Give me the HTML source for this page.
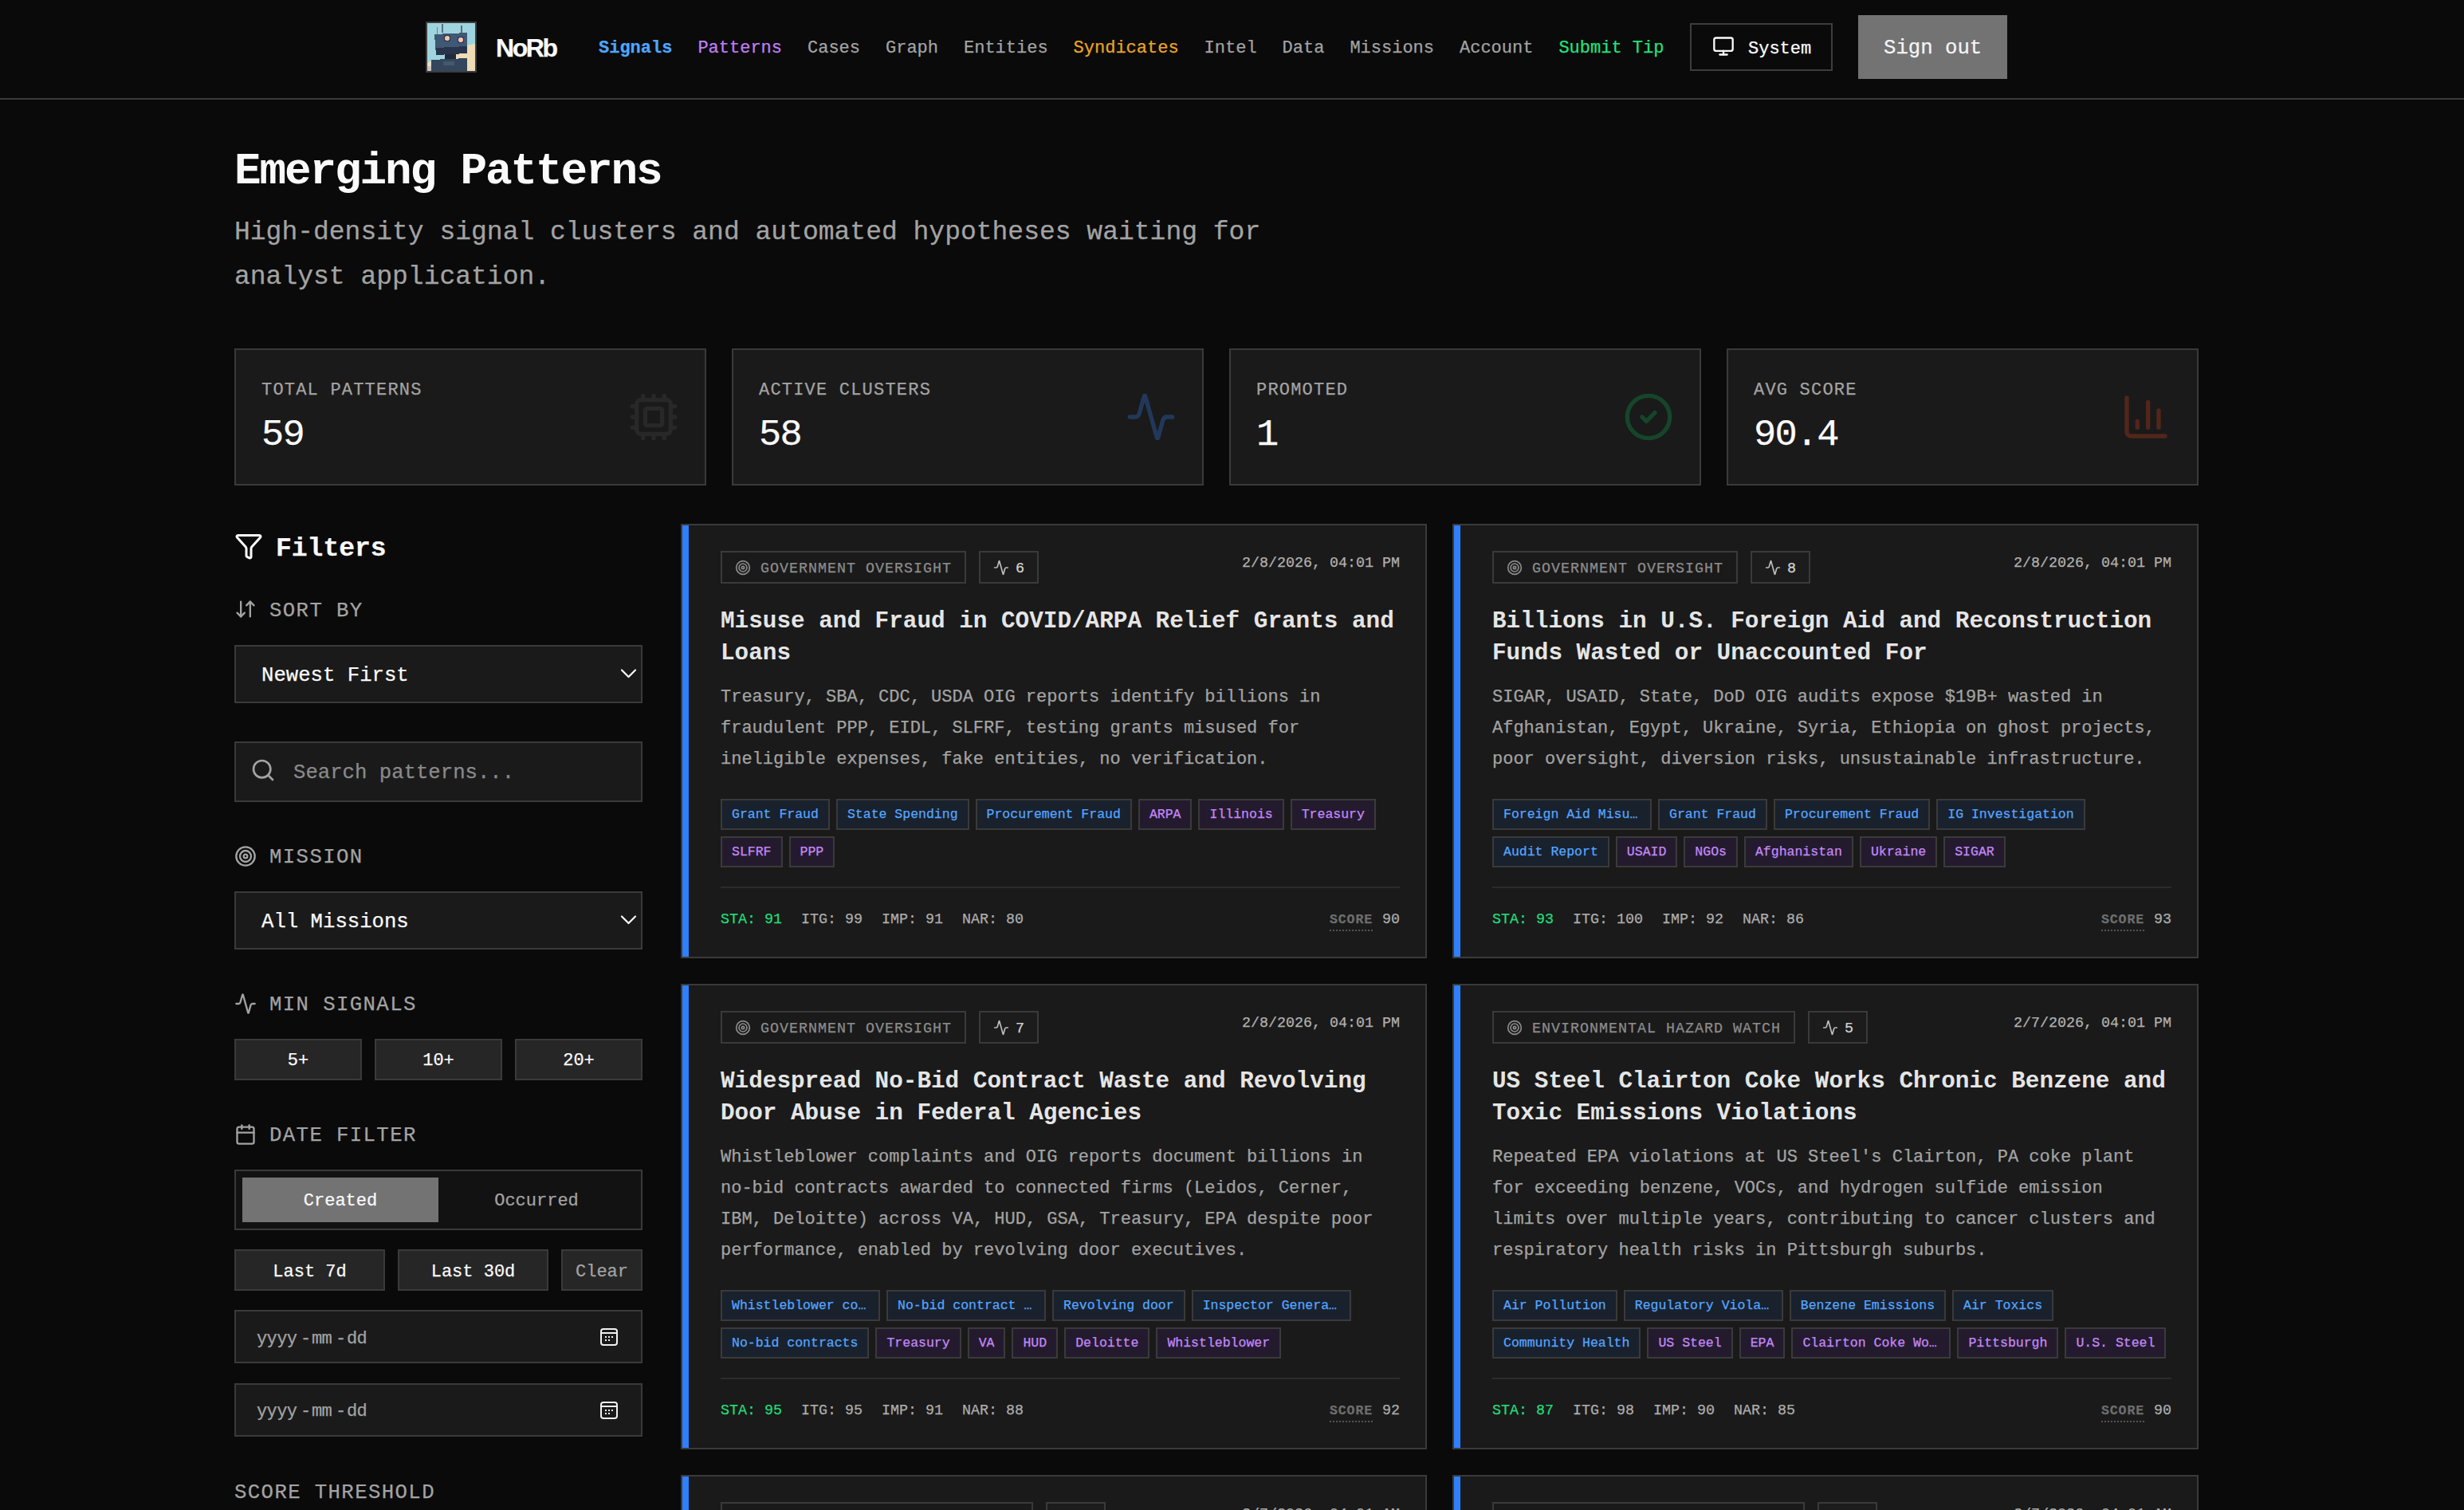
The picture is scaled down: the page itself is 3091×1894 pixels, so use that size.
<!DOCTYPE html>
<html><head><meta charset="utf-8"><title>Emerging Patterns</title>
<style>
*{box-sizing:border-box;margin:0;padding:0}
html,body{width:3091px;height:1894px;overflow:hidden;background:#0a0a0a}
body{position:relative;font-family:"Liberation Mono",monospace;color:#f5f5f5;-webkit-font-smoothing:antialiased}
.abs{position:absolute}
.t,#sub,.cdesc,.tag,.badge,.stats,.date{-webkit-text-stroke:0.25px currentColor}
#title,.ctitle{-webkit-text-stroke:0}
svg.i{position:absolute;fill:none;stroke:currentColor;stroke-width:2;stroke-linecap:round;stroke-linejoin:round}
.t{position:absolute;white-space:nowrap;line-height:1}
/* nav */
#nav{position:absolute;left:0;top:0;width:3091px;height:125px;border-bottom:2px solid #3b3b3b;background:#0a0a0a}
#logo{position:absolute;left:534px;top:27px;width:64px;height:64px;border:2px solid #3d3d3d;overflow:hidden;background:#9fd3dc}
#brand{font-family:"Liberation Sans",sans-serif;font-weight:700;font-size:32px;letter-spacing:-2.4px;color:#fafafa}
.nv{font-size:22.0px;color:#a3a3a3}
.sysbtn{position:absolute;left:2120px;top:29px;width:179px;height:60px;border:2px solid #3d3d3d}
.signout{position:absolute;left:2331px;top:19px;width:187px;height:80px;background:#737373}
/* header */
#title{font-size:56px;font-weight:700;letter-spacing:-2.1px;color:#fafafa}
#sub{position:absolute;left:294px;top:0;width:1344px;font-size:33.0px;line-height:56px;color:#a3a3a3;white-space:normal}
/* stat cards */
.stat{position:absolute;top:437px;width:592px;height:172px;border:2px solid #3a3a3a;background:#1a1a1a}
.stat .lab{font-size:22.0px;letter-spacing:1.2px;color:#a3a3a3}
.stat .val{font-size:44.0px;color:#fafafa}
/* sidebar */
.slab{font-size:25.67px;letter-spacing:1.4px;color:#a3a3a3}
.box{position:absolute;left:294px;width:512px;border:2px solid #3a3a3a;background:#1a1a1a}
.btn{position:absolute;border:2px solid #3a3a3a;background:#262626;font-size:22.0px;color:#fafafa;display:flex;align-items:center;justify-content:center}
/* cards */
.card{position:absolute;width:936px;border:2px solid #3a3a3a;background:#1a1a1a;overflow:hidden}
.card .bar{position:absolute;left:0;top:0;bottom:0;width:8px;background:#2f80fa}
.card .in{position:absolute;left:48px;top:32px;width:852px}
.brow{position:relative;height:41px;display:flex;gap:16px}
.badge{height:41px;border:2px solid #3a3a3a;display:flex;align-items:center;padding:0 16px;font-size:18.33px;letter-spacing:1px;color:#8c8c8c;position:relative}
.badge svg{position:relative;flex:none}
.btxt{position:relative;top:1.5px}
.cnt{letter-spacing:0;color:#d4d4d4}
.date{position:absolute;right:0;top:7px;font-size:18.33px;color:#b0b0b0;line-height:1}
.ctitle{font-size:29.33px;font-weight:700;line-height:40px;color:#e5e5e5}
.cdesc{font-size:22.0px;line-height:39px;color:#a3a3a3}
.tags{display:flex;flex-wrap:wrap;gap:8px}
.tag{height:39px;border:2px solid #3a3a3a;padding:0 12px;font-size:16.5px;line-height:35px;max-width:200px;overflow:hidden;text-overflow:ellipsis;white-space:nowrap}
.tb{background:#19212d;color:#55a6ff}
.tp{background:#231b2d;color:#c688fb}
.div{height:2px;background:#2c2c2c}
.stats{position:relative;font-size:18.33px;color:#adadad;height:28px;line-height:28px;white-space:nowrap}
.stats b{font-weight:400;margin-right:24px}
.stats .g{color:#22dc78}
.score{position:absolute;right:0;top:0}
.score i{font-style:normal;font-size:16.5px;letter-spacing:0.9px;color:#6e6e6e;border-bottom:2px dotted #555;padding-bottom:3px;margin-right:12px;font-weight:700}
</style></head>
<body>
<div id="nav">
<div id="logo"><svg width="60" height="60" viewBox="0 0 60 60" style="display:block" shape-rendering="crispEdges">
<rect width="60" height="60" fill="#9fd4de"/>
<path d="M36 60 L36 36 Q44 28 60 26 L60 60 Z" fill="#eddcb4"/>
<path d="M0 50 Q6 46 12 47 L12 60 L0 60Z" fill="#e8dcc0"/>
<rect x="0" y="54" width="6" height="6" fill="#c8c4c0"/>
<rect x="18" y="1" width="2" height="11" fill="#5b6f7e"/>
<rect x="12" y="5" width="1" height="13" fill="#6c8090"/>
<rect x="42" y="3" width="2" height="13" fill="#5b6f7e"/>
<path d="M9 14 L50 12 L50 38 L11 40 Z" fill="#3f5873"/>
<path d="M11 31 L50 29 L50 38 L11 40 Z" fill="#28344c"/>
<circle cx="25" cy="19" r="4.5" fill="#2a3850"/><circle cx="25" cy="19" r="3" fill="#e9a9c6"/><circle cx="25" cy="19" r="2" fill="#f3cf8e"/>
<circle cx="42" cy="21" r="4.5" fill="#2a3850"/><circle cx="42" cy="21" r="3" fill="#e9a9c6"/><circle cx="42" cy="21" r="2" fill="#f3cf8e"/>
<rect x="22" y="39" width="14" height="6" fill="#1f2a3c"/>
<path d="M5 46 L50 44 L50 60 L5 60 Z" fill="#34465e"/>
<rect x="20" y="48" width="14" height="5" fill="#46586c"/>
</svg></div>
<div class="t" id="brand" style="left:622px;top:44.0px;line-height:1">NoRb</div>
<div class="t " style="left:751.0px;top:50.15px;font-size:22.0px;font-weight:700;color:#4fa6ff">Signals</div>
<div class="t " style="left:875.4px;top:50.15px;font-size:22.0px;color:#c17ef2">Patterns</div>
<div class="t " style="left:1013.0px;top:50.15px;font-size:22.0px;color:#a3a3a3">Cases</div>
<div class="t " style="left:1111.0px;top:50.15px;font-size:22.0px;color:#a3a3a3">Graph</div>
<div class="t " style="left:1209.0px;top:50.15px;font-size:22.0px;color:#a3a3a3">Entities</div>
<div class="t " style="left:1346.6px;top:50.15px;font-size:22.0px;color:#eba423">Syndicates</div>
<div class="t " style="left:1510.6px;top:50.15px;font-size:22.0px;color:#a3a3a3">Intel</div>
<div class="t " style="left:1608.6px;top:50.15px;font-size:22.0px;color:#a3a3a3">Data</div>
<div class="t " style="left:1693.4px;top:50.15px;font-size:22.0px;color:#a3a3a3">Missions</div>
<div class="t " style="left:1831.0px;top:50.15px;font-size:22.0px;color:#a3a3a3">Account</div>
<div class="t " style="left:1955.4px;top:50.15px;font-size:22.0px;color:#22e27a">Submit Tip</div>
<div class="sysbtn"></div>
<svg class="i" style="left:2148px;top:44px;width:28px;height:28px;color:#fafafa;stroke-width:2" viewBox="0 0 24 24" ><rect width="20" height="14" x="2" y="3" rx="2"/><path d="M8 21h8"/><path d="M12 17v4"/></svg>
<div class="t " style="left:2193px;top:50.65px;font-size:22.0px;color:#fafafa">System</div>
<div class="signout"></div>
<div class="t " style="left:2363px;top:48.34px;font-size:25.67px;color:#f5f5f5">Sign out</div>
</div>
<div class="t" id="title" style="left:294px;top:187.1px">Emerging Patterns</div>
<div id="sub" style="top:264.22px">High-density signal clusters and automated hypotheses waiting for analyst application.</div>
<div class="stat" style="left:294px"></div>
<div class="t " style="left:328px;top:479.15px;font-size:22.0px;letter-spacing:1.2px;color:#a3a3a3">TOTAL PATTERNS</div>
<div class="t" style="left:328px;top:522.0px;font-size:47px;letter-spacing:-1.8px;color:#fafafa">59</div>
<svg class="i" style="left:788px;top:491px;width:64px;height:64px;color:#282828;stroke-width:2" viewBox="0 0 24 24" ><path d="M12 20v2"/><path d="M12 2v2"/><path d="M17 20v2"/><path d="M17 2v2"/><path d="M2 12h2"/><path d="M2 17h2"/><path d="M2 7h2"/><path d="M20 12h2"/><path d="M20 17h2"/><path d="M20 7h2"/><path d="M7 20v2"/><path d="M7 2v2"/><rect x="4" y="4" width="16" height="16" rx="2"/><rect x="8" y="8" width="8" height="8" rx="1"/></svg>
<div class="stat" style="left:918px"></div>
<div class="t " style="left:952px;top:479.15px;font-size:22.0px;letter-spacing:1.2px;color:#a3a3a3">ACTIVE CLUSTERS</div>
<div class="t" style="left:952px;top:522.0px;font-size:47px;letter-spacing:-1.8px;color:#fafafa">58</div>
<svg class="i" style="left:1412px;top:491px;width:64px;height:64px;color:#22385a;stroke-width:2" viewBox="0 0 24 24" ><path d="M22 12h-2.48a2 2 0 0 0-1.93 1.46l-2.35 8.36a.25.25 0 0 1-.48 0L9.24 2.18a.25.25 0 0 0-.48 0l-2.35 8.36A2 2 0 0 1 4.49 12H2"/></svg>
<div class="stat" style="left:1542px"></div>
<div class="t " style="left:1576px;top:479.15px;font-size:22.0px;letter-spacing:1.2px;color:#a3a3a3">PROMOTED</div>
<div class="t" style="left:1576px;top:522.0px;font-size:47px;letter-spacing:-1.8px;color:#fafafa">1</div>
<svg class="i" style="left:2036px;top:491px;width:64px;height:64px;color:#15452a;stroke-width:2" viewBox="0 0 24 24" ><circle cx="12" cy="12" r="10"/><path d="m9 12 2 2 4-4"/></svg>
<div class="stat" style="left:2166px"></div>
<div class="t " style="left:2200px;top:479.15px;font-size:22.0px;letter-spacing:1.2px;color:#a3a3a3">AVG SCORE</div>
<div class="t" style="left:2200px;top:522.0px;font-size:47px;letter-spacing:-1.8px;color:#fafafa">90.4</div>
<svg class="i" style="left:2660px;top:491px;width:64px;height:64px;color:#52261b;stroke-width:2" viewBox="0 0 24 24" ><path d="M3 3v16a2 2 0 0 0 2 2h16"/><path d="M18 17V9"/><path d="M13 17V5"/><path d="M8 17v-3"/></svg>
<svg class="i" style="left:294px;top:667px;width:36px;height:36px;color:#fafafa;stroke-width:2" viewBox="0 0 24 24" ><path d="M10 20a1 1 0 0 0 .553.895l2 1A1 1 0 0 0 14 21v-7a2 2 0 0 1 .517-1.341L21.74 4.67A1 1 0 0 0 21 3H3a1 1 0 0 0-.742 1.67l7.225 7.989A2 2 0 0 1 10 14z"/></svg>
<div class="t " style="left:346px;top:671.72px;font-size:33.0px;font-weight:700;color:#fafafa">Filters</div>
<svg class="i" style="left:294px;top:750px;width:28px;height:28px;color:#a3a3a3;stroke-width:2" viewBox="0 0 24 24" ><path d="m3 16 4 4 4-4"/><path d="M7 20V4"/><path d="m21 8-4-4-4 4"/><path d="M17 4v16"/></svg>
<div class="t " style="left:338px;top:754.34px;font-size:25.67px;letter-spacing:1.4px;color:#a3a3a3">SORT BY</div>
<div class="box" style="top:809px;height:73px"></div>
<div class="t " style="left:328px;top:835.34px;font-size:25.67px;color:#fafafa">Newest First</div>
<svg class="i" style="left:778px;top:838px;width:21px;height:14px;color:#fafafa;stroke-width:2.2" viewBox="0 0 21 14"><path d="M2 2.5 L10.5 11 L19 2.5"/></svg>
<div class="box" style="top:930px;height:76px"></div>
<svg class="i" style="left:314px;top:950px;width:32px;height:32px;color:#a3a3a3;stroke-width:2" viewBox="0 0 24 24" ><circle cx="11" cy="11" r="8"/><path d="m21 21-4.3-4.3"/></svg>
<div class="t " style="left:368px;top:957.34px;font-size:25.67px;color:#8a8a8a">Search patterns...</div>
<svg class="i" style="left:294px;top:1060px;width:28px;height:28px;color:#a3a3a3;stroke-width:2" viewBox="0 0 24 24" ><circle cx="12" cy="12" r="10"/><circle cx="12" cy="12" r="6"/><circle cx="12" cy="12" r="2"/></svg>
<div class="t " style="left:338px;top:1063.34px;font-size:25.67px;letter-spacing:1.4px;color:#a3a3a3">MISSION</div>
<div class="box" style="top:1118px;height:73px"></div>
<div class="t " style="left:328px;top:1144.34px;font-size:25.67px;color:#fafafa">All Missions</div>
<svg class="i" style="left:778px;top:1147px;width:21px;height:14px;color:#fafafa;stroke-width:2.2" viewBox="0 0 21 14"><path d="M2 2.5 L10.5 11 L19 2.5"/></svg>
<svg class="i" style="left:294px;top:1245px;width:28px;height:28px;color:#a3a3a3;stroke-width:2" viewBox="0 0 24 24" ><path d="M22 12h-2.48a2 2 0 0 0-1.93 1.46l-2.35 8.36a.25.25 0 0 1-.48 0L9.24 2.18a.25.25 0 0 0-.48 0l-2.35 8.36A2 2 0 0 1 4.49 12H2"/></svg>
<div class="t " style="left:338px;top:1248.34px;font-size:25.67px;letter-spacing:1.4px;color:#a3a3a3">MIN SIGNALS</div>
<div class="btn" style="left:294px;top:1303px;width:160px;height:52px"></div>
<div class="t " style="left:360.8px;top:1320.15px;font-size:22.0px;color:#fafafa">5+</div>
<div class="btn" style="left:470px;top:1303px;width:160px;height:52px"></div>
<div class="t " style="left:530.2px;top:1320.15px;font-size:22.0px;color:#fafafa">10+</div>
<div class="btn" style="left:646px;top:1303px;width:160px;height:52px"></div>
<div class="t " style="left:706.2px;top:1320.15px;font-size:22.0px;color:#fafafa">20+</div>
<svg class="i" style="left:294px;top:1409px;width:28px;height:28px;color:#a3a3a3;stroke-width:2" viewBox="0 0 24 24" ><path d="M8 2v4"/><path d="M16 2v4"/><rect width="18" height="18" x="3" y="4" rx="2"/><path d="M3 10h18"/></svg>
<div class="t " style="left:338px;top:1412.34px;font-size:25.67px;letter-spacing:1.4px;color:#a3a3a3">DATE FILTER</div>
<div class="abs" style="left:294px;top:1467px;width:512px;height:76px;border:2px solid #3a3a3a;background:#121212"></div>
<div class="abs" style="left:304px;top:1477px;width:246px;height:56px;background:#737373"></div>
<div class="t " style="left:380.8px;top:1496.15px;font-size:22.0px;color:#fafafa">Created</div>
<div class="t " style="left:620.2px;top:1496.15px;font-size:22.0px;color:#a3a3a3">Occurred</div>
<div class="btn" style="left:294px;top:1567px;width:189px;height:52px"></div>
<div class="t " style="left:342.3px;top:1585.15px;font-size:22.0px;color:#fafafa">Last 7d</div>
<div class="btn" style="left:499px;top:1567px;width:189px;height:52px"></div>
<div class="t " style="left:540.7px;top:1585.15px;font-size:22.0px;color:#fafafa">Last 30d</div>
<div class="btn" style="left:704px;top:1567px;width:102px;height:52px"></div>
<div class="t " style="left:722.0px;top:1585.15px;font-size:22.0px;color:#a3a3a3">Clear</div>
<div class="box" style="top:1643px;height:67px"></div>
<div class="t " style="left:322px;top:1669.15px;font-size:22.0px;color:#a3a3a3;letter-spacing:-0.6px">yyyy</div>
<div class="t " style="left:377px;top:1669.15px;font-size:22.0px;color:#a3a3a3;letter-spacing:-0.6px">-</div>
<div class="t " style="left:391px;top:1669.15px;font-size:22.0px;color:#a3a3a3;letter-spacing:-0.6px">mm</div>
<div class="t " style="left:421px;top:1669.15px;font-size:22.0px;color:#a3a3a3;letter-spacing:-0.6px">-</div>
<div class="t " style="left:435px;top:1669.15px;font-size:22.0px;color:#a3a3a3;letter-spacing:-0.6px">dd</div>
<div class="abs" style="left:753px;top:1666px;width:22px;height:22px;border:2px solid #f0f0f0;border-radius:4px"></div>
<div class="abs" style="left:753px;top:1671px;width:22px;height:2px;background:#f0f0f0"></div>
<div class="abs" style="left:759px;top:1676px;width:2px;height:2px;background:#f0f0f0"></div>
<div class="abs" style="left:763px;top:1676px;width:2px;height:2px;background:#f0f0f0"></div>
<div class="abs" style="left:767px;top:1676px;width:2px;height:2px;background:#f0f0f0"></div>
<div class="abs" style="left:759px;top:1680px;width:2px;height:2px;background:#f0f0f0"></div>
<div class="abs" style="left:763px;top:1680px;width:2px;height:2px;background:#f0f0f0"></div>
<div class="box" style="top:1735px;height:67px"></div>
<div class="t " style="left:322px;top:1760.15px;font-size:22.0px;color:#a3a3a3;letter-spacing:-0.6px">yyyy</div>
<div class="t " style="left:377px;top:1760.15px;font-size:22.0px;color:#a3a3a3;letter-spacing:-0.6px">-</div>
<div class="t " style="left:391px;top:1760.15px;font-size:22.0px;color:#a3a3a3;letter-spacing:-0.6px">mm</div>
<div class="t " style="left:421px;top:1760.15px;font-size:22.0px;color:#a3a3a3;letter-spacing:-0.6px">-</div>
<div class="t " style="left:435px;top:1760.15px;font-size:22.0px;color:#a3a3a3;letter-spacing:-0.6px">dd</div>
<div class="abs" style="left:753px;top:1758px;width:22px;height:22px;border:2px solid #f0f0f0;border-radius:4px"></div>
<div class="abs" style="left:753px;top:1763px;width:22px;height:2px;background:#f0f0f0"></div>
<div class="abs" style="left:759px;top:1768px;width:2px;height:2px;background:#f0f0f0"></div>
<div class="abs" style="left:763px;top:1768px;width:2px;height:2px;background:#f0f0f0"></div>
<div class="abs" style="left:767px;top:1768px;width:2px;height:2px;background:#f0f0f0"></div>
<div class="abs" style="left:759px;top:1772px;width:2px;height:2px;background:#f0f0f0"></div>
<div class="abs" style="left:763px;top:1772px;width:2px;height:2px;background:#f0f0f0"></div>
<div class="t " style="left:294px;top:1860.34px;font-size:25.67px;letter-spacing:1.4px;color:#a3a3a3">SCORE THRESHOLD</div>
<div class="card" style="left:854px;top:657px;height:545px"><div class="bar"></div><div class="in">
<div class="brow">
<div class="badge"><svg style="width:20px;height:20px;color:#8c8c8c;fill:none;stroke:currentColor;stroke-width:2;stroke-linecap:round;stroke-linejoin:round;" viewBox="0 0 24 24"><circle cx="12" cy="12" r="10"/><circle cx="12" cy="12" r="6"/><circle cx="12" cy="12" r="2"/></svg><span class="btxt" style="margin-left:12px">GOVERNMENT OVERSIGHT</span></div>
<div class="badge" style="letter-spacing:0;background:#1c1c1c"><svg style="width:20px;height:20px;color:#bdbdbd;fill:none;stroke:currentColor;stroke-width:2;stroke-linecap:round;stroke-linejoin:round;" viewBox="0 0 24 24"><path d="M22 12h-2.48a2 2 0 0 0-1.93 1.46l-2.35 8.36a.25.25 0 0 1-.48 0L9.24 2.18a.25.25 0 0 0-.48 0l-2.35 8.36A2 2 0 0 1 4.49 12H2"/></svg><span class="btxt cnt" style="margin-left:8px">6</span></div>
<div class="date">2/8/2026, 04:01 PM</div>
</div>
<div class="ctitle" style="margin-top:28px">Misuse and Fraud in COVID/ARPA Relief Grants and Loans</div>
<div class="cdesc" style="margin-top:14.5px">Treasury, SBA, CDC, USDA OIG reports identify billions in fraudulent PPP, EIDL, SLFRF, testing grants misused for ineligible expenses, fake entities, no verification.</div>
<div class="tags" style="margin-top:30.4px"><div class="tag tb">Grant Fraud</div><div class="tag tb">State Spending</div><div class="tag tb">Procurement Fraud</div><div class="tag tp">ARPA</div><div class="tag tp">Illinois</div><div class="tag tp">Treasury</div><div class="tag tp">SLFRF</div><div class="tag tp">PPP</div></div>
<div class="div" style="margin-top:24px"></div>
<div class="stats" style="margin-top:26px"><b class="g">STA: 91</b><b>ITG: 99</b><b>IMP: 91</b><b>NAR: 80</b><span class="score"><i>SCORE</i>90</span></div>
</div></div>
<div class="card" style="left:1822px;top:657px;height:545px"><div class="bar"></div><div class="in">
<div class="brow">
<div class="badge"><svg style="width:20px;height:20px;color:#8c8c8c;fill:none;stroke:currentColor;stroke-width:2;stroke-linecap:round;stroke-linejoin:round;" viewBox="0 0 24 24"><circle cx="12" cy="12" r="10"/><circle cx="12" cy="12" r="6"/><circle cx="12" cy="12" r="2"/></svg><span class="btxt" style="margin-left:12px">GOVERNMENT OVERSIGHT</span></div>
<div class="badge" style="letter-spacing:0;background:#1c1c1c"><svg style="width:20px;height:20px;color:#bdbdbd;fill:none;stroke:currentColor;stroke-width:2;stroke-linecap:round;stroke-linejoin:round;" viewBox="0 0 24 24"><path d="M22 12h-2.48a2 2 0 0 0-1.93 1.46l-2.35 8.36a.25.25 0 0 1-.48 0L9.24 2.18a.25.25 0 0 0-.48 0l-2.35 8.36A2 2 0 0 1 4.49 12H2"/></svg><span class="btxt cnt" style="margin-left:8px">8</span></div>
<div class="date">2/8/2026, 04:01 PM</div>
</div>
<div class="ctitle" style="margin-top:28px">Billions in U.S. Foreign Aid and Reconstruction Funds Wasted or Unaccounted For</div>
<div class="cdesc" style="margin-top:14.5px">SIGAR, USAID, State, DoD OIG audits expose $19B+ wasted in Afghanistan, Egypt, Ukraine, Syria, Ethiopia on ghost projects, poor oversight, diversion risks, unsustainable infrastructure.</div>
<div class="tags" style="margin-top:30.4px"><div class="tag tb">Foreign Aid Misuse</div><div class="tag tb">Grant Fraud</div><div class="tag tb">Procurement Fraud</div><div class="tag tb">IG Investigation</div><div class="tag tb">Audit Report</div><div class="tag tp">USAID</div><div class="tag tp">NGOs</div><div class="tag tp">Afghanistan</div><div class="tag tp">Ukraine</div><div class="tag tp">SIGAR</div></div>
<div class="div" style="margin-top:24px"></div>
<div class="stats" style="margin-top:26px"><b class="g">STA: 93</b><b>ITG: 100</b><b>IMP: 92</b><b>NAR: 86</b><span class="score"><i>SCORE</i>93</span></div>
</div></div>
<div class="card" style="left:854px;top:1234px;height:584px"><div class="bar"></div><div class="in">
<div class="brow">
<div class="badge"><svg style="width:20px;height:20px;color:#8c8c8c;fill:none;stroke:currentColor;stroke-width:2;stroke-linecap:round;stroke-linejoin:round;" viewBox="0 0 24 24"><circle cx="12" cy="12" r="10"/><circle cx="12" cy="12" r="6"/><circle cx="12" cy="12" r="2"/></svg><span class="btxt" style="margin-left:12px">GOVERNMENT OVERSIGHT</span></div>
<div class="badge" style="letter-spacing:0;background:#1c1c1c"><svg style="width:20px;height:20px;color:#bdbdbd;fill:none;stroke:currentColor;stroke-width:2;stroke-linecap:round;stroke-linejoin:round;" viewBox="0 0 24 24"><path d="M22 12h-2.48a2 2 0 0 0-1.93 1.46l-2.35 8.36a.25.25 0 0 1-.48 0L9.24 2.18a.25.25 0 0 0-.48 0l-2.35 8.36A2 2 0 0 1 4.49 12H2"/></svg><span class="btxt cnt" style="margin-left:8px">7</span></div>
<div class="date">2/8/2026, 04:01 PM</div>
</div>
<div class="ctitle" style="margin-top:28px">Widespread No-Bid Contract Waste and Revolving Door Abuse in Federal Agencies</div>
<div class="cdesc" style="margin-top:14.5px">Whistleblower complaints and OIG reports document billions in no-bid contracts awarded to connected firms (Leidos, Cerner, IBM, Deloitte) across VA, HUD, GSA, Treasury, EPA despite poor performance, enabled by revolving door executives.</div>
<div class="tags" style="margin-top:30.4px"><div class="tag tb">Whistleblower complaints</div><div class="tag tb">No-bid contract awards</div><div class="tag tb">Revolving door</div><div class="tag tb">Inspector General reports</div><div class="tag tb">No-bid contracts</div><div class="tag tp">Treasury</div><div class="tag tp">VA</div><div class="tag tp">HUD</div><div class="tag tp">Deloitte</div><div class="tag tp">Whistleblower</div></div>
<div class="div" style="margin-top:24px"></div>
<div class="stats" style="margin-top:26px"><b class="g">STA: 95</b><b>ITG: 95</b><b>IMP: 91</b><b>NAR: 88</b><span class="score"><i>SCORE</i>92</span></div>
</div></div>
<div class="card" style="left:1822px;top:1234px;height:584px"><div class="bar"></div><div class="in">
<div class="brow">
<div class="badge"><svg style="width:20px;height:20px;color:#8c8c8c;fill:none;stroke:currentColor;stroke-width:2;stroke-linecap:round;stroke-linejoin:round;" viewBox="0 0 24 24"><circle cx="12" cy="12" r="10"/><circle cx="12" cy="12" r="6"/><circle cx="12" cy="12" r="2"/></svg><span class="btxt" style="margin-left:12px">ENVIRONMENTAL HAZARD WATCH</span></div>
<div class="badge" style="letter-spacing:0;background:#1c1c1c"><svg style="width:20px;height:20px;color:#bdbdbd;fill:none;stroke:currentColor;stroke-width:2;stroke-linecap:round;stroke-linejoin:round;" viewBox="0 0 24 24"><path d="M22 12h-2.48a2 2 0 0 0-1.93 1.46l-2.35 8.36a.25.25 0 0 1-.48 0L9.24 2.18a.25.25 0 0 0-.48 0l-2.35 8.36A2 2 0 0 1 4.49 12H2"/></svg><span class="btxt cnt" style="margin-left:8px">5</span></div>
<div class="date">2/7/2026, 04:01 PM</div>
</div>
<div class="ctitle" style="margin-top:28px">US Steel Clairton Coke Works Chronic Benzene and Toxic Emissions Violations</div>
<div class="cdesc" style="margin-top:14.5px">Repeated EPA violations at US Steel's Clairton, PA coke plant for exceeding benzene, VOCs, and hydrogen sulfide emission limits over multiple years, contributing to cancer clusters and respiratory health risks in Pittsburgh suburbs.</div>
<div class="tags" style="margin-top:30.4px"><div class="tag tb">Air Pollution</div><div class="tag tb">Regulatory Violations</div><div class="tag tb">Benzene Emissions</div><div class="tag tb">Air Toxics</div><div class="tag tb">Community Health</div><div class="tag tp">US Steel</div><div class="tag tp">EPA</div><div class="tag tp">Clairton Coke Works</div><div class="tag tp">Pittsburgh</div><div class="tag tp">U.S. Steel</div></div>
<div class="div" style="margin-top:24px"></div>
<div class="stats" style="margin-top:26px"><b class="g">STA: 87</b><b>ITG: 98</b><b>IMP: 90</b><b>NAR: 85</b><span class="score"><i>SCORE</i>90</span></div>
</div></div>
<div class="card" style="left:854px;top:1850px;height:545px"><div class="bar"></div><div class="in">
<div class="brow">
<div class="badge"><svg style="width:20px;height:20px;color:#8c8c8c;fill:none;stroke:currentColor;stroke-width:2;stroke-linecap:round;stroke-linejoin:round;" viewBox="0 0 24 24"><circle cx="12" cy="12" r="10"/><circle cx="12" cy="12" r="6"/><circle cx="12" cy="12" r="2"/></svg><span class="btxt" style="margin-left:12px">HEALTHCARE FRAUD TASK FORCE</span></div>
<div class="badge" style="letter-spacing:0;background:#1c1c1c"><svg style="width:20px;height:20px;color:#bdbdbd;fill:none;stroke:currentColor;stroke-width:2;stroke-linecap:round;stroke-linejoin:round;" viewBox="0 0 24 24"><path d="M22 12h-2.48a2 2 0 0 0-1.93 1.46l-2.35 8.36a.25.25 0 0 1-.48 0L9.24 2.18a.25.25 0 0 0-.48 0l-2.35 8.36A2 2 0 0 1 4.49 12H2"/></svg><span class="btxt cnt" style="margin-left:8px">9</span></div>
<div class="date">2/7/2026, 04:01 AM</div>
</div>
</div></div>
<div class="card" style="left:1822px;top:1850px;height:545px"><div class="bar"></div><div class="in">
<div class="brow">
<div class="badge"><svg style="width:20px;height:20px;color:#8c8c8c;fill:none;stroke:currentColor;stroke-width:2;stroke-linecap:round;stroke-linejoin:round;" viewBox="0 0 24 24"><circle cx="12" cy="12" r="10"/><circle cx="12" cy="12" r="6"/><circle cx="12" cy="12" r="2"/></svg><span class="btxt" style="margin-left:12px">HEALTHCARE FRAUD TASK FORCE</span></div>
<div class="badge" style="letter-spacing:0;background:#1c1c1c"><svg style="width:20px;height:20px;color:#bdbdbd;fill:none;stroke:currentColor;stroke-width:2;stroke-linecap:round;stroke-linejoin:round;" viewBox="0 0 24 24"><path d="M22 12h-2.48a2 2 0 0 0-1.93 1.46l-2.35 8.36a.25.25 0 0 1-.48 0L9.24 2.18a.25.25 0 0 0-.48 0l-2.35 8.36A2 2 0 0 1 4.49 12H2"/></svg><span class="btxt cnt" style="margin-left:8px">6</span></div>
<div class="date">2/7/2026, 04:01 AM</div>
</div>
</div></div>
</body></html>
